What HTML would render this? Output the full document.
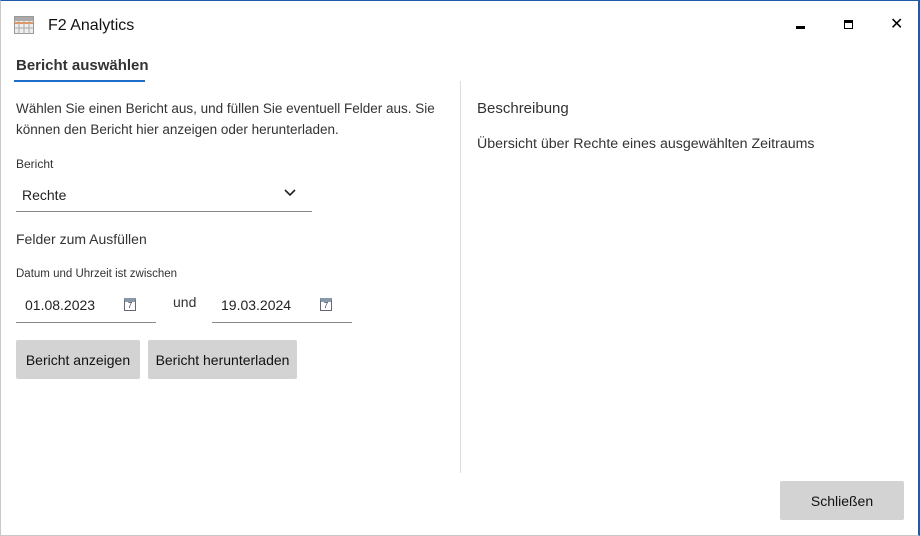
<!DOCTYPE html>
<html><head><meta charset="utf-8"><style>
*{margin:0;padding:0;box-sizing:border-box}
body{width:920px;height:536px;background:#fff;font-family:"Liberation Sans",sans-serif;color:#222;position:relative;overflow:hidden}
.frame{position:absolute;left:0;top:0;width:920px;height:536px;border:1px solid #c8c8c8;border-top:1px solid #1e5aa8;border-right:2px solid #1e5aa8}
.a{position:absolute;white-space:nowrap}
.line{position:absolute;height:1px;background:#888}
.btn{position:absolute;background:#d3d3d3;border-radius:2px;font-size:14px;color:#111;display:flex;align-items:center;justify-content:center}
.cal{position:absolute;width:12px;height:13px;border:1px solid #667;border-top:4px solid #8899aa;font-size:8px;line-height:8px;text-align:center;color:#334}
</style></head><body>
<div class="frame"></div>
<svg class="a" style="left:14px;top:16px" width="20" height="18"><rect x="0.5" y="0.5" width="19" height="17" fill="#eee" stroke="#999"/><rect x="1" y="1" width="18" height="4" fill="#aaa"/><rect x="1" y="6" width="18" height="2" fill="#e8945a"/><g stroke="#aaa"><line x1="5" y1="5" x2="5" y2="18"/><line x1="10" y1="5" x2="10" y2="18"/><line x1="15" y1="5" x2="15" y2="18"/><line x1="0" y1="12" x2="20" y2="12"/></g></svg>
<div class="a" style="left:48px;top:17px;font-size:16px;color:#111">F2 Analytics</div>
<div class="a" style="left:796px;top:26px;width:9px;height:3px;background:#000"></div>
<div class="a" style="left:844px;top:20px;width:9px;height:9px;border:1.5px solid #000;border-top:3px solid #000"></div>
<div class="a" style="left:890px;top:14px;font-size:16px;color:#000">✕</div>
<div class="a" style="left:16px;top:57px;font-size:15px;font-weight:bold;color:#333">Bericht auswählen</div>
<div class="a" style="left:14px;top:80px;width:131px;height:2px;background:#1e6fc8"></div>
<div class="a" style="left:16px;top:98px;font-size:13.5px;line-height:21px;color:#333">Wählen Sie einen Bericht aus, und füllen Sie eventuell Felder aus. Sie<br>können den Bericht hier anzeigen oder herunterladen.</div>
<div class="a" style="left:16px;top:157px;font-size:12px;color:#333">Bericht</div>
<div class="a" style="left:22px;top:187px;font-size:14px;color:#222">Rechte</div>
<svg class="a" style="left:284px;top:189px" width="12" height="8"><path d="M1 1 L6 6 L11 1" fill="none" stroke="#222" stroke-width="1.6"/></svg>
<div class="line" style="left:16px;top:211px;width:296px"></div>
<div class="a" style="left:16px;top:231px;font-size:14px;color:#333">Felder zum Ausfüllen</div>
<div class="a" style="left:16px;top:268px;font-size:11.5px;color:#333">Datum und Uhrzeit ist zwischen</div>
<div class="a" style="left:25px;top:297px;font-size:14px;color:#222">01.08.2023</div>
<div class="cal" style="left:124px;top:298px">7</div>
<div class="line" style="left:16px;top:322px;width:140px"></div>
<div class="a" style="left:173px;top:294px;font-size:14px;color:#333">und</div>
<div class="a" style="left:221px;top:297px;font-size:14px;color:#222">19.03.2024</div>
<div class="cal" style="left:320px;top:298px">7</div>
<div class="line" style="left:212px;top:322px;width:140px"></div>
<div class="btn" style="left:16px;top:340px;width:124px;height:39px">Bericht anzeigen</div>
<div class="btn" style="left:148px;top:340px;width:149px;height:39px">Bericht herunterladen</div>
<div class="a" style="left:460px;top:81px;width:1px;height:392px;background:#ddd"></div>
<div class="a" style="left:477px;top:100px;font-size:15px;color:#333">Beschreibung</div>
<div class="a" style="left:477px;top:136px;font-size:14.2px;color:#333">Übersicht über Rechte eines ausgewählten Zeitraums</div>
<div class="btn" style="left:780px;top:481px;width:124px;height:39px">Schließen</div>
</body></html>
